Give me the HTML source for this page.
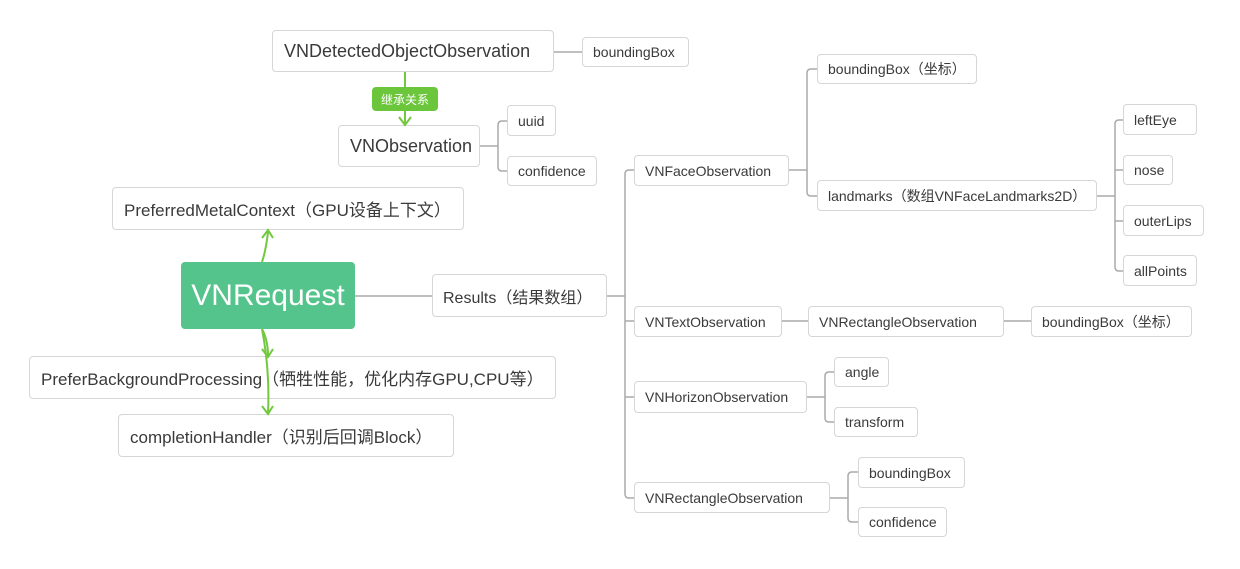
<!DOCTYPE html><html><head><meta charset="utf-8"><style>
body{margin:0;width:1240px;height:569px;background:#fff;position:relative;overflow:hidden;font-family:"Liberation Sans","Noto Sans CJK SC",sans-serif;color:#3a3a3a}
.b{position:absolute;box-sizing:border-box;border:1px solid #d6d6d6;border-radius:4px;background:#fff;display:flex;align-items:center;padding-left:10px;font-size:14px;white-space:nowrap}
.l{font-size:18px;padding-left:11px}
.m{font-size:16px}
svg{position:absolute;left:0;top:0}
</style></head><body>
<svg width="1240" height="569" fill="none">
<g stroke="#aaa" stroke-width="1.5">
<path d="M554 52H582"/>
<path d="M480 146H498M507 121H502Q498 121 498 125V167Q498 171 502 171H507"/>
<path d="M355 296H432M607 296H625"/>
<path d="M634 170H629Q625 170 625 174V494Q625 498 629 498H634M625 321H634M625 397H634"/>
<path d="M789 170H807M817 69H811Q807 69 807 73V192Q807 196 811 196H817"/>
<path d="M1097 196H1115M1123 120H1119Q1115 120 1115 124V267Q1115 271 1119 271H1123M1115 170H1123M1115 221H1123"/>
<path d="M782 321H808M1004 321H1031"/>
<path d="M807 397H825M834 372H829Q825 372 825 376V418Q825 422 829 422H834"/>
<path d="M830 498H848M858 472H852Q848 472 848 476V518Q848 522 852 522H858"/>
</g>
</svg>
<div class="b l" style="left:272px;top:30px;width:282px;height:42px">VNDetectedObjectObservation</div>
<div class="b" style="left:582px;top:37px;width:107px;height:30px">boundingBox</div>
<div style="position:absolute;left:372px;top:87px;width:66px;height:24px;background:#6cc63c;border-radius:4px;color:#fff;font-size:12px;display:flex;align-items:center;justify-content:center">继承关系</div>
<div class="b l" style="left:338px;top:125px;width:142px;height:42px">VNObservation</div>
<div class="b" style="left:507px;top:105px;width:49px;height:31px">uuid</div>
<div class="b" style="left:507px;top:156px;width:90px;height:30px">confidence</div>
<div class="b l" style="left:112px;top:187px;width:352px;height:43px;font-size:17px">PreferredMetalContext（GPU设备上下文）</div>
<div style="position:absolute;left:181px;top:262px;width:174px;height:67px;background:#55c48c;border-radius:4px;color:#fff;font-size:30px;display:flex;align-items:center;justify-content:center">VNRequest</div>
<div class="b m" style="left:432px;top:274px;width:175px;height:43px">Results（结果数组）</div>
<div class="b l" style="left:29px;top:356px;width:527px;height:43px;font-size:17px">PreferBackgroundProcessing（牺牲性能，优化内存GPU,CPU等）</div>
<div class="b l" style="left:118px;top:414px;width:336px;height:43px;font-size:17px">completionHandler（识别后回调Block）</div>
<div class="b" style="left:634px;top:155px;width:155px;height:31px">VNFaceObservation</div>
<div class="b" style="left:817px;top:54px;width:160px;height:30px">boundingBox（坐标）</div>
<div class="b" style="left:817px;top:180px;width:280px;height:31px">landmarks（数组VNFaceLandmarks2D）</div>
<div class="b" style="left:1123px;top:104px;width:74px;height:31px">leftEye</div>
<div class="b" style="left:1123px;top:155px;width:50px;height:30px">nose</div>
<div class="b" style="left:1123px;top:205px;width:81px;height:31px">outerLips</div>
<div class="b" style="left:1123px;top:255px;width:74px;height:31px">allPoints</div>
<div class="b" style="left:634px;top:306px;width:148px;height:31px">VNTextObservation</div>
<div class="b" style="left:808px;top:306px;width:196px;height:31px">VNRectangleObservation</div>
<div class="b" style="left:1031px;top:306px;width:161px;height:31px">boundingBox（坐标）</div>
<div class="b" style="left:634px;top:381px;width:173px;height:32px">VNHorizonObservation</div>
<div class="b" style="left:834px;top:357px;width:55px;height:30px">angle</div>
<div class="b" style="left:834px;top:407px;width:84px;height:30px">transform</div>
<div class="b" style="left:634px;top:482px;width:196px;height:31px">VNRectangleObservation</div>
<div class="b" style="left:858px;top:457px;width:107px;height:31px">boundingBox</div>
<div class="b" style="left:858px;top:507px;width:89px;height:30px">confidence</div>
<svg width="1240" height="569" fill="none">
<g stroke="#72c83e" stroke-width="2">
<path d="M405 72V87M405 111V125M399 117L405 125L411 117"/>
<path d="M262 262Q266 250 268 232M262 238L268 230L273 238"/>
<path d="M262 329Q268 340 268 356M262 349L268 357L273 349"/>
<path d="M262 329Q270 370 268 414M262 406L268 414L273 406"/>
</g>
</svg>
</body></html>
